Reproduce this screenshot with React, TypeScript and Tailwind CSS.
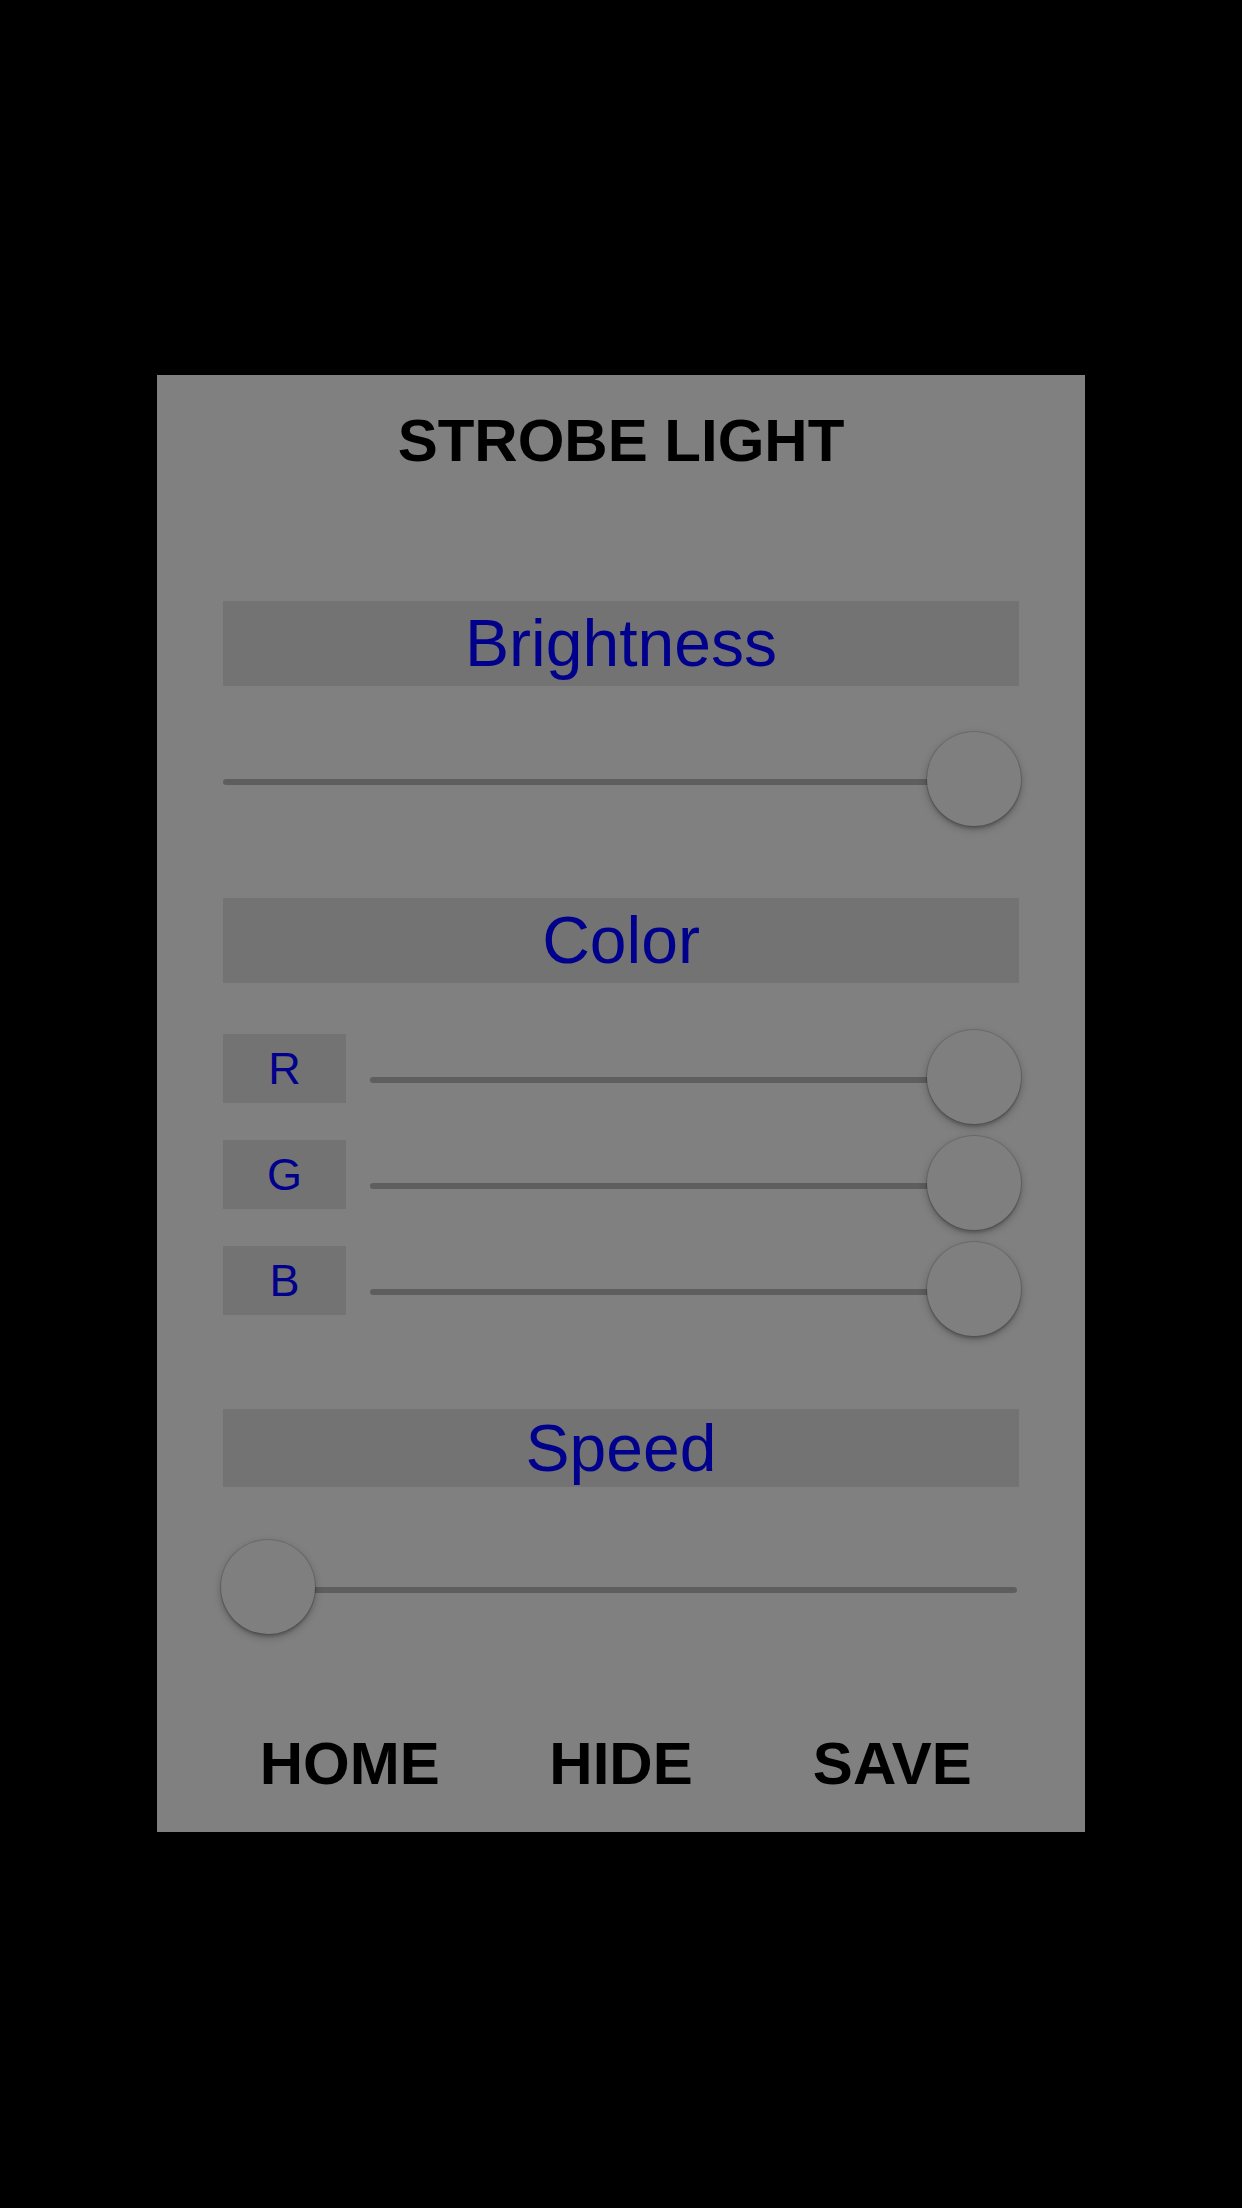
import React from "react";

interface SliderProps {
  value: number; // 0..1
  className?: string;
}

// iOS-style slider: thin track with a round knob sitting on top
const Slider: React.FC<SliderProps> = ({ value, className = "" }) => {
  return (
    <div className={`relative h-[94px] ${className}`}>
      <div className="absolute left-[2px] right-[4px] top-[47px] h-[6px] rounded-full bg-[#5e5e5e]" />
      <div
        className="absolute top-0 h-[94px] w-[94px] rounded-full bg-[#7f7f7f] shadow-[0_0_0_1px_rgba(0,0,0,0.12),0_3px_8px_rgba(0,0,0,0.28),0_3px_2px_rgba(0,0,0,0.12)]"
        style={{ left: `calc(${value} * (100% - 94px))` }}
      />
    </div>
  );
};

const SectionHeader: React.FC<{ title: string; height: string }> = ({ title, height }) => (
  <div
    className={`flex items-center justify-center bg-[#737373] text-[66px] text-[#00008c] ${height}`}
  >
    {title}
  </div>
);

const channels = [
  { label: "R", value: 1 },
  { label: "G", value: 1 },
  { label: "B", value: 1 },
];

export default function App() {
  return (
    <div
      className="min-h-[2208px] w-full bg-black pt-[375px]"
      style={{ fontFamily: '"Liberation Sans", Arial, sans-serif' }}
    >
      <div className="mx-auto flex h-[1457px] w-[928px] flex-col bg-[#808080] px-[66px] pt-[26px]">
        <h1 className="h-[80px] text-center text-[60px] font-bold leading-[80px] text-black">
          STROBE LIGHT
        </h1>

        {/* Brightness */}
        <div className="mt-[120px]">
          <SectionHeader title="Brightness" height="h-[85px]" />
        </div>
        <Slider value={1} className="-mx-[2px] mt-[46px]" />

        {/* Color */}
        <div className="mt-[72px]">
          <SectionHeader title="Color" height="h-[85px]" />
        </div>
        <div className="mt-[51px] flex flex-col gap-[37px]">
          {channels.map((ch) => (
            <div key={ch.label} className="flex h-[69px] items-start">
              <div className="flex h-[69px] w-[123px] shrink-0 items-center justify-center bg-[#737373] text-[45px] text-[#00008c]">
                {ch.label}
              </div>
              <Slider value={ch.value} className="-mr-[2px] -mt-[4px] ml-[22px] flex-1" />
            </div>
          ))}
        </div>

        {/* Speed */}
        <div className="mt-[94px]">
          <SectionHeader title="Speed" height="h-[78px]" />
        </div>
        <Slider value={0} className="-mx-[2px] mt-[53px]" />

        {/* Footer actions */}
        <div className="-mx-[9px] mt-[90px] grid h-[80px] grid-cols-3 text-center text-[60px] font-bold leading-[80px] text-black">
          <button className="leading-[80px]">HOME</button>
          <button className="leading-[80px]">HIDE</button>
          <button className="leading-[80px]">SAVE</button>
        </div>
      </div>
    </div>
  );
}
